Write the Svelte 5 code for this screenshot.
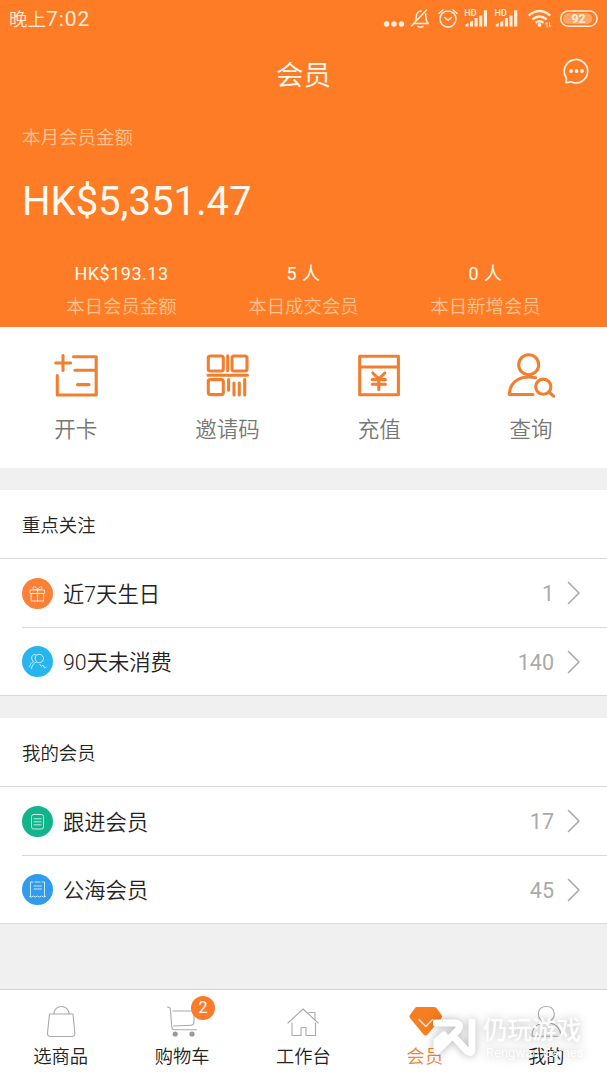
<script>
  let month = { label: '本月会员金额', value: 'HK$5,351.47' }

  let stats = [
    { value: 'HK$193.13', label: '本日会员金额' },
    { value: '5 人', label: '本日成交会员' },
    { value: '0 人', label: '本日新增会员' }
  ]

  let actions = [
    { icon: 'card', label: '开卡' },
    { icon: 'code', label: '邀请码' },
    { icon: 'recharge', label: '充值' },
    { icon: 'search', label: '查询' }
  ]

  let sections = [
    {
      title: '重点关注',
      rows: [
        { icon: 'gift', label: '近7天生日', count: 1 },
        { icon: 'people', label: '90天未消费', count: 140 }
      ]
    },
    {
      title: '我的会员',
      rows: [
        { icon: 'follow', label: '跟进会员', count: 17 },
        { icon: 'pool', label: '公海会员', count: 45 }
      ]
    }
  ]

  let tabs = [
    { icon: 'bag', label: '选商品' },
    { icon: 'cart', label: '购物车', badge: 2 },
    { icon: 'home', label: '工作台' },
    { icon: 'vip', label: '会员' },
    { icon: 'me', label: '我的' }
  ]

  let active = 'vip'
</script>

<main>
  <header>
    <div class="status">
      <span class="time">晚上<span>7:02</span></span>
      <svg class="status-icons" width="220" height="26" viewBox="0 0 220 26">
        <g class="solid">
          <circle cx="6.5" cy="18" r="2.7" />
          <circle cx="14" cy="18" r="2.7" />
          <circle cx="21.5" cy="18" r="2.7" />
        </g>
        <path d="M34 17.5c2.2-1.6 2.2-4 2.2-6.5 0-3.5 2.2-6 5-6M45.6 8c.6 3.5-.2 7 2.6 9.5H35M38 20.5q2.5 1.2 5 0M46.5 4 31.5 20" />
        <circle cx="68" cy="13" r="8" />
        <path d="m64.8 11.5 3.2 3 3.4-3M59 7.4l4-3.4M77 7.4 73 4" />
        {#each [0, 30.3] as dx}
          <g class="solid" transform="translate({dx} 0)">
            <text x="84.3" y="9.8" class="hd">HD</text>
            <path d="M85.5 20.5v-2l3-1.5v3.5zM90 20.5v-4.500l3-1.500v6zM94.600 20.500V12h3v8.500zM99.200 20.500v-11h3v11zM103.800 20.500V4.300h3.200v16.200z" />
          </g>
        {/each}
        <path class="wifi" d="M148.8 9.6q10.700-9 21.400 0M152.300 13.400q7.200-6 14.400 0M155.600 16.800q4-3.100 8 0" />
        <circle class="solid" cx="159.5" cy="19" r="1.9" />
        <path class="tiny" d="M167 21v-4.500l-1.500 1.500M169.500 16.500V21l1.500-1.500" />
        <rect x="180.7" y="4.9" width="36.4" height="15.4" rx="7.7" />
        <rect class="level" x="183.2" y="7.2" width="29" height="10.8" rx="5.4" />
        <text x="198.5" y="17.2" class="battery">92</text>
      </svg>
    </div>

    <div class="title">
      <h1>会员</h1>
      <svg class="chat" width="28" height="28" viewBox="0 0 28 28">
        <path d="M4.1 20.5A11.7 11.7 0 1 1 9 24.8Q6.500 25.700 3.800 25.500 4.800 23 4.100 20.500z" />
        <circle cx="9" cy="14" r="1.9" />
        <circle cx="14.500" cy="14" r="1.9" />
        <circle cx="20" cy="14" r="1.9" />
      </svg>
    </div>

    <p class="month-label">{month.label}</p>
    <p class="month-value">{month.value}</p>

    <div class="stats">
      {#each stats as stat}
        <div>
          <strong>{stat.value}</strong>
          <span>{stat.label}</span>
        </div>
      {/each}
    </div>
  </header>

  <nav class="actions">
    {#each actions as action}
      <div class="action">
        <svg width="48" height="48" viewBox="0 0 48 48">
          {#if action.icon === 'card'}
            <path d="M3.7 11h15M11 3.5V18.5M21.5 4.7H44.2V43H5.3V23.5M23 18.3h21M25.5 32.6H37" />
          {:else if action.icon === 'code'}
            <rect x="4.3" y="4" width="15" height="15" rx="2" />
            <rect x="28" y="4" width="15" height="15" rx="2" />
            <rect x="4.3" y="27.6" width="15" height="15" rx="2" />
            <path d="M23.7 3.7v15M4 23.3h39.5M24.6 27.5v10.8M30 31v12M35.3 31v12M40.7 27.5V43" />
          {:else if action.icon === 'recharge'}
            <path d="M4.7 4.2h38.7v38.6H4.7zM4.7 15h38.7" />
            <path d="m17.8 21 6 5.8 6-5.8M23.8 26.8v10.6M17.2 27.6h13.2M17.2 32.2h13.2" />
          {:else}
            <circle cx="21.7" cy="12.7" r="10" />
            <path d="M28.5 25.7C23 24.8 15.5 24.8 11 27.5 5.5 30.5 2.5 36.5 2.3 42.5H26" />
            <circle cx="36.3" cy="34.7" r="7.6" />
            <path d="m41.8 40 5 4.2" />
          {/if}
        </svg>
        <span>{action.label}</span>
      </div>
    {/each}
  </nav>

  {#each sections as section}
    <section>
      <h2>{section.title}</h2>
      <ul>
        {#each section.rows as row}
          <li>
            <svg class="dot {row.icon}" width="31" height="31" viewBox="0 0 31 31">
              {#if row.icon === 'gift'}
                <path d="M8.500 12h14v3.500h-14zM9.500 15.500h12v7.500h-12zM15.500 12v11M15.500 12C10 12 10 8.500 12.500 8.800 14.500 9 15.500 12 15.500 12s1-3 3-3.200c2.500-.3 2.500 3.200-3 3.200" />
              {:else if row.icon === 'people'}
                <circle cx="17.3" cy="12.5" r="4.2" />
                <path d="M14.5 16c-3 1-4.500 3.500-5 6.500M14 8.500c-3-.5-5 2-4.200 4.500.3 1.300 1 2 1.800 2.600-2.300 1-3.600 3-4 5.200M18 18.500l1.500 2 1.500-1.500 1.500 3 1.500-1" />
              {:else if row.icon === 'follow'}
                <rect x="9.5" y="8.5" width="12" height="14.5" rx="2" />
                <path d="M12 12.8h7M12 15.8h7M12 18.8h7" />
              {:else}
                <path d="M11 8H8.500v14.500M20 8h2.500v14.500M13 8h5M7.500 22.500q2 1.500 4-.5 2 2 4 0 2 2 4 0 2 2 4 .5M12 12h7.500M12 15h7.500" />
              {/if}
            </svg>
            <span class="name">{row.label}</span>
            <span class="count">{row.count}</span>
            <svg class="arrow" width="14" height="24" viewBox="0 0 14 24">
              <path d="m1.5 1.5 10.5 10.5-10.5 10.5" />
            </svg>
          </li>
        {/each}
      </ul>
    </section>
  {/each}

  <footer>
    {#each tabs as tab}
      <div class="tab" class:active={tab.icon === active}>
        <div class="tab-icon">
          <svg width="36" height="36" viewBox="0 0 36 36">
            {#if tab.icon === 'bag'}
              <path d="M6.500 12h23.500l1.800 19q.2 3.500-3 3.500H7.500q-3.200 0-3-3.500zM10.800 12C11 2 26 2 26 12" />
            {:else if tab.icon === 'cart'}
              <path d="M3.500 5q2.700-.3 2.900 2.500l1.400 17.500q.2 2.700 3 2.700H32.500M9 9h21v11q0 3-3 3.200L9.500 24" />
              <circle class="wheel" cx="11.2" cy="32" r="2.6" />
              <circle class="wheel" cx="28" cy="32" r="2.6" />
            {:else if tab.icon === 'home'}
              <path d="M3 21 18 7l15.200 14M7 21v12.500h9v-8h5v8h9.500V21M24 10.500h6V18" />
            {:else if tab.icon === 'vip'}
              <path class="gem" d="M10 5h17q1.500 0 2.500 1l5 7q1.200 1.700-.2 3.200L20.500 32.500q-2 2-4 0L3.200 16.200q-1.400-1.500-.2-3.200L8 6q.8-1 2-1z" />
              <path class="tick" d="m12 17.500 6.800 7 6.800-7" />
            {:else}
              <path d="M14 18.500C8.500 15.500 9 4.500 18.300 4.500s9.800 11 4.300 14V21c4 1 10 4.500 10 13.200H4C4 25.500 10 22 14 21z" />
            {/if}
          </svg>
          {#if tab.badge}
            <span class="badge">{tab.badge}</span>
          {/if}
        </div>
        <span>{tab.label}</span>
      </div>
    {/each}
  </footer>

  <div class="watermark">
    <svg width="46" height="42" viewBox="0 0 46 42">
      <path d="M3 7H22Q29 8 25 14L4 35V25L11 19" />
      <path d="M21 21 34 35Q39 39 39 33V6" />
      <circle cx="11" cy="24.500" r="1" />
    </svg>
    <div>
      <b>仍玩游戏</b>
      <i>Rengwan Games</i>
    </div>
  </div>
</main>

<style>
:global(body) {
  margin: 0;
  background: #f0f0f0;
}

main {
  position: relative;
  display: flex;
  flex-direction: column;
  height: 1080px;
  overflow: hidden;
  font-family: Roboto, "Noto Sans CJK SC", sans-serif;
  font-weight: 350;
  color: #222;
  background: #f0f0f0;
}

h1, h2, p, ul {
  margin: 0;
  padding: 0;
  font-weight: inherit;
}

svg {
  display: block;
  fill: none;
  stroke-linecap: round;
  stroke-linejoin: round;
}

header {
  height: 327px;
  box-sizing: border-box;
  background: #ff7c26;
  color: #fffaf0;
}

.status {
  display: flex;
  justify-content: space-between;
  padding: 6px 7px 0 9px;
  height: 34px;
}

.time {
  font-size: 18.5px;
  line-height: 27px;
  color: #ffeeda;
}

.time span {
  font-size: 21px;
  font-weight: 400;
  letter-spacing: 0.9px;
}

.status-icons {
  stroke: #ffeeda;
  stroke-width: 1.5;
}

.solid, .battery {
  fill: #ffeeda;
  stroke: none;
}

.hd {
  font-size: 9px;
  font-weight: 500;
}

.wifi {
  stroke-width: 2.4;
  stroke-linecap: butt;
}

.tiny {
  stroke-width: 0.9;
}

.level {
  fill: #ffa566;
  stroke: none;
}

.battery {
  font-size: 12px;
  font-weight: 700;
  text-anchor: middle;
}

.title {
  display: grid;
  grid-template-columns: 28px 1fr 28px;
  align-items: center;
  padding: 0 17px;
  height: 70px;
}

h1 {
  grid-column: 2;
  padding-top: 1px;
  font-size: 27.5px;
  line-height: 40px;
  text-align: center;
}

.chat {
  stroke: #fff3e2;
  stroke-width: 1.7;
  margin-top: -8px;
}

.chat circle {
  fill: #fff3e2;
  stroke: none;
}

.month-label {
  margin-top: 14px;
  padding-left: 22px;
  font-size: 18.5px;
  line-height: 28px;
  color: #ffc591;
}

.month-value {
  margin-top: 25px;
  padding-left: 22px;
  font-size: 40px;
  line-height: 50px;
  font-weight: 400;
}

.stats {
  display: grid;
  grid-template-columns: repeat(3, 182px);
  justify-content: center;
  margin-top: 33px;
  text-align: center;
}

.stats strong, .stats span {
  display: block;
}

.stats strong {
  font-size: 18px;
  line-height: 28px;
  font-weight: 400;
  letter-spacing: 0.5px;
}

.stats span {
  margin-top: 5px;
  font-size: 18.4px;
  line-height: 28px;
  color: #ffc591;
}

.actions {
  display: grid;
  grid-template-columns: repeat(4, 1fr);
  height: 141px;
  background: #fff;
}

.action {
  display: flex;
  flex-direction: column;
  align-items: center;
  padding-top: 25px;
}

.action svg {
  stroke: #f27f30;
  stroke-width: 3.1;
}

.action span {
  margin-top: 14px;
  font-size: 21.5px;
  line-height: 32px;
  color: #777;
}

section {
  margin-top: 22px;
  background: #fff;
  border-bottom: 1px solid #d9d9d9;
}

h2 {
  height: 68px;
  padding-left: 22px;
  font-size: 18.4px;
  line-height: 71px;
  border-bottom: 1px solid #d9d9d9;
}

ul {
  list-style: none;
  padding-left: 22px;
}

li {
  display: flex;
  align-items: center;
  height: 68px;
  padding-right: 26px;
}

li + li {
  height: 67px;
  border-top: 1px solid #d9d9d9;
}

.dot {
  border-radius: 50%;
  stroke: #fff;
  stroke-opacity: 0.75;
  stroke-width: 1;
}

.gift {
  background: #fc8137;
}

.people {
  background: #27b5ed;
}

.follow {
  background: #12b48b;
}

.pool {
  background: #2f9cee;
}

.name {
  flex: 1;
  margin-left: 10px;
  padding-bottom: 2px;
  font-size: 21.3px;
}

.count {
  padding-top: 1px;
  font-size: 21.5px;
  font-weight: 400;
  color: #aaa;
}

.arrow {
  margin-left: 13px;
  stroke: #aaa;
  stroke-width: 1.6;
}

footer {
  display: grid;
  grid-template-columns: repeat(5, 1fr);
  height: 90px;
  margin-top: auto;
  background: #fff;
  border-top: 1px solid #d5d5d5;
}

.tab {
  display: flex;
  flex-direction: column;
  align-items: center;
  padding-top: 12px;
  font-size: 18.3px;
  line-height: 28px;
}

.tab > span {
  margin-top: 5px;
}

.tab-icon {
  position: relative;
}

.tab svg {
  stroke: #aaa;
  stroke-width: 1.1;
}

.tab .wheel {
  fill: #999;
  stroke: none;
}

.tab .gem {
  fill: #f77e20;
  stroke: none;
}

.tab .tick {
  stroke: #ffe6cf;
  stroke-width: 1.6;
}

.active {
  color: #ee8434;
}

.badge {
  position: absolute;
  top: -6px;
  right: -15px;
  width: 24px;
  height: 24px;
  border-radius: 50%;
  background: #fb7b2a;
  color: #fff;
  font-size: 16px;
  line-height: 24px;
  text-align: center;
  font-weight: 400;
}

.watermark {
  position: absolute;
  left: 433px;
  top: 1016px;
  display: flex;
  gap: 4px;
  color: rgba(255, 255, 255, 0.9);
  filter: drop-shadow(0 0 4px rgba(0, 0, 0, 0.3));
}

.watermark svg {
  stroke: #fff;
  stroke-width: 7;
}

.watermark circle {
  stroke-width: 1;
}

.watermark b, .watermark i {
  display: block;
  white-space: nowrap;
}

.watermark b {
  font-size: 24.5px;
  line-height: 30px;
  font-weight: 500;
}

.watermark i {
  padding-left: 3px;
  font-size: 13px;
  line-height: 14px;
  font-style: normal;
  font-weight: 400;
}
</style>
